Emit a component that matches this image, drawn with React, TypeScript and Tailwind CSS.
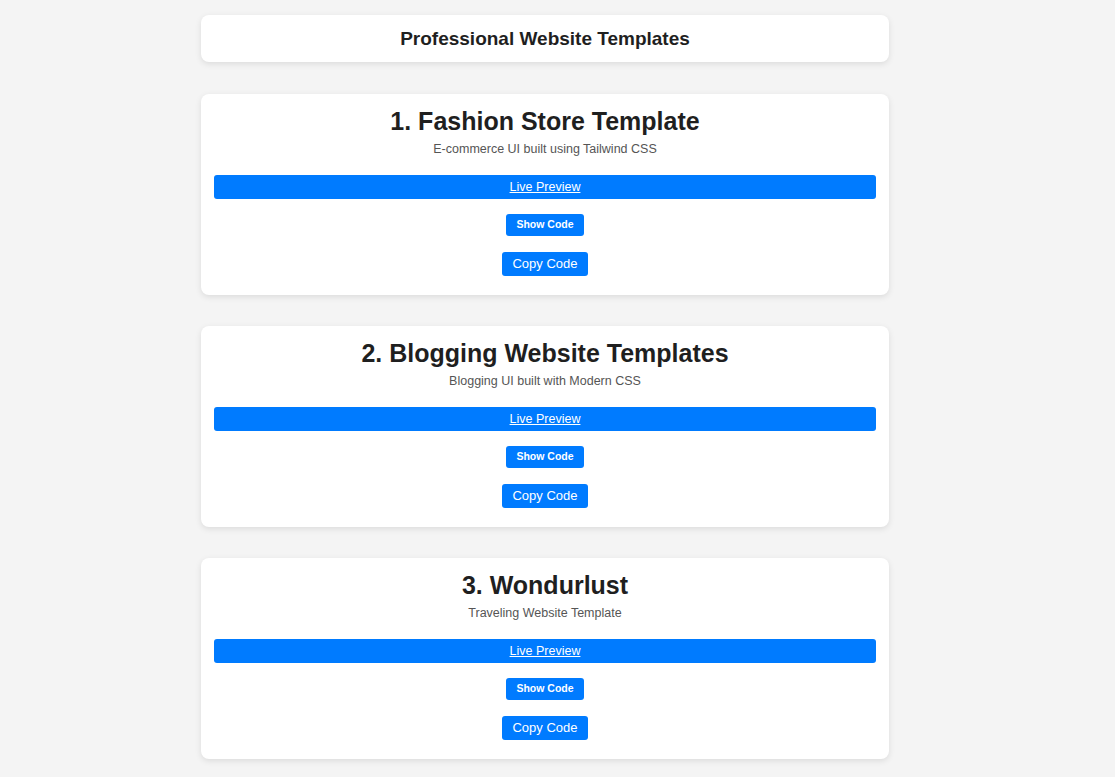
import React from 'react';

interface Template {
  title: string;
  subtitle: string;
}

const TEMPLATES: Template[] = [
  { title: '1. Fashion Store Template', subtitle: 'E-commerce UI built using Tailwind CSS' },
  { title: '2. Blogging Website Templates', subtitle: 'Blogging UI built with Modern CSS' },
  { title: '3. Wondurlust', subtitle: 'Traveling Website Template' },
];

const TemplateCard: React.FC<{ item: Template }> = ({ item }) => (
  <div className="bg-white rounded-lg shadow-[0_2px_6px_rgba(0,0,0,0.1)] px-[13px] pt-[12px] pb-[19px] flex flex-col items-center">
    <h2 className="text-[25px] leading-[30px] font-bold text-[#1f1f1f]">{item.title}</h2>
    <p className="mt-[5px] text-[12.5px] leading-[16px] text-[#555]">{item.subtitle}</p>

    <a
      href="#"
      className="mt-[18px] w-full h-[24px] flex items-center justify-center bg-[#007bff] rounded-[3px] text-white text-[12.5px] underline"
    >
      Live Preview
    </a>

    <button className="mt-[15px] h-[22px] w-[78px] bg-[#007bff] rounded-[3px] text-white text-[10.5px] font-bold">
      Show Code
    </button>

    <button className="mt-[16px] h-[24px] w-[86px] bg-[#007bff] rounded-[3px] text-white text-[13px]">
      Copy Code
    </button>
  </div>
);

export default function App() {
  return (
    <div className="min-h-screen bg-[#f4f4f4] font-['Liberation_Sans',Arial,sans-serif] pt-[15px] pb-[20px] pr-[25px]">
      <div className="w-[688px] mx-auto flex flex-col gap-[31px]">
        <div className="bg-white rounded-lg shadow-[0_2px_6px_rgba(0,0,0,0.1)] h-[47px] mb-px pt-[2px] flex items-center justify-center">
          <h1 className="text-[19px] font-bold text-[#1f1f1f]">Professional Website Templates</h1>
        </div>

        {TEMPLATES.map((t) => (
          <TemplateCard key={t.title} item={t} />
        ))}
      </div>
    </div>
  );
}
